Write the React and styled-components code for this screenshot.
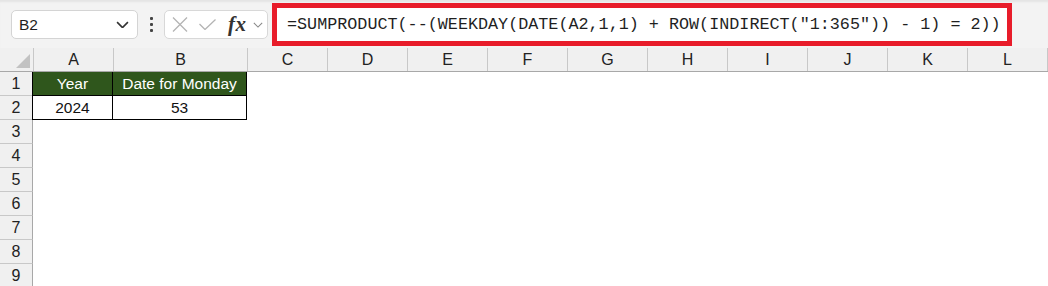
import React from 'react';
import styled, { createGlobalStyle } from 'styled-components';

const GlobalStyle = createGlobalStyle`
  body {
    margin: 0;
    background: #ffffff;
    font-family: "Liberation Sans", Arial, sans-serif;
  }
`;

const Sheet = styled.div`
  width: 1048px;
  height: 286px;
  overflow: hidden;
  background: #fff;
`;

const Toolbar = styled.div`
  height: 45px;
  padding-top: 3px;
  background: #f3f3f3;
  display: flex;
  align-items: center;
  box-shadow: inset 0 3px 2px -1px #e4e4e4;
`;

const NameBox = styled.div`
  margin-left: 11px;
  width: 110px;
  height: 27px;
  background: #fff;
  border: 1px solid #d4d4d4;
  border-radius: 5px;
  display: flex;
  align-items: center;
  justify-content: space-between;
  padding: 0 8px 0 7px;
  box-sizing: content-box;
  font-size: 15.5px;
  color: #1f1f1f;
  margin-top: -2px;
`;

const Dots = styled.div`
  width: 26px;
  display: flex;
  flex-direction: column;
  align-items: center;
  gap: 3px;
  margin-top: -2px;

  span {
    width: 3px;
    height: 3px;
    background: #444;
    border-radius: 1px;
  }
`;

const FxBox = styled.div`
  width: 104px;
  height: 29px;
  background: #fff;
  border: 1px solid #d8d8d8;
  border-radius: 5px;
  display: flex;
  align-items: center;
  padding-left: 7px;
  box-sizing: border-box;
  margin-top: -2px;
  gap: 11px;
`;

const FxLabel = styled.span`
  font-family: "Liberation Serif", "Times New Roman", serif;
  font-style: italic;
  font-weight: bold;
  font-size: 21px;
  color: #333;
  letter-spacing: 0.5px;
  margin-left: 1px;
`;

const FxCaret = styled.span`
  display: flex;
  margin-left: -5px;
`;

const FormulaBox = styled.div`
  margin-left: 4px;
  width: 740px;
  height: 43px;
  box-sizing: border-box;
  border: 5px solid #e81c2a;
  background: #fff;
  display: flex;
  align-items: center;
  padding-left: 10px;
  margin-top: -2px;
  font-family: "Liberation Mono", "Courier New", monospace;
  font-size: 16.75px;
  color: #1f1f1f;
  white-space: pre;
`;

const HeaderRow = styled.div`
  display: flex;
  height: 23px;
  background: #f0f0f0;
  border-bottom: 1px solid #a8a8a8;
`;

const Corner = styled.div`
  width: 33px;
  border-right: 1px solid #c8c8c8;
  position: relative;
  flex-shrink: 0;

  &::after {
    content: '';
    position: absolute;
    right: 3px;
    bottom: 3px;
    width: 0;
    height: 0;
    border-left: 14px solid transparent;
    border-bottom: 14px solid #c2c2c2;
  }
`;

const ColHead = styled.div`
  width: ${({ w }) => w - 1}px;
  flex-shrink: 0;
  border-right: 1px solid #c8c8c8;
  display: flex;
  align-items: center;
  justify-content: center;
  font-size: 16px;
  color: #222;
`;

const Row = styled.div`
  display: flex;
  height: 24px;
`;

const RowHead = styled.div`
  width: 33px;
  flex-shrink: 0;
  box-sizing: border-box;
  background: #f0f0f0;
  border-right: 1px solid #a8a8a8;
  border-bottom: 1px solid #c8c8c8;
  display: flex;
  align-items: center;
  justify-content: center;
  font-size: 16px;
  color: #222;
`;

const Cell = styled.div`
  width: ${({ w }) => w}px;
  flex-shrink: 0;
  box-sizing: border-box;
  display: flex;
  align-items: center;
  justify-content: center;
  font-size: 15.5px;
  background: ${({ head }) => (head ? '#2f561c' : '#fff')};
  color: ${({ head }) => (head ? '#fff' : '#111')};
  border-right: 1px solid #000;
  border-bottom: 1px solid #000;
  margin-left: ${({ first }) => (first ? '-1px' : '0')};
  border-left: ${({ first }) => (first ? '1px solid #000' : '0')};
`;

const Blank = styled.div`
  flex: 1;
  background: #fff;
`;

const Chevron = ({ size = 12, color = '#444', weight = 1.3 }) => (
  <svg width={size} height={size * 0.6} viewBox="0 0 12 7" fill="none">
    <path d="M1 1 L6 6 L11 1" stroke={color} strokeWidth={weight} />
  </svg>
);

const CancelIcon = () => (
  <svg width="16" height="15" viewBox="0 0 16 15" fill="none">
    <path d="M1 0.5 L15 14.5 M15 0.5 L1 14.5" stroke="#b4b4b4" strokeWidth="1.3" />
  </svg>
);

const CheckIcon = () => (
  <svg width="17" height="11" viewBox="0 0 17 11" fill="none">
    <path d="M0.5 5 L6 10.5 L16.5 0.5" stroke="#b4b4b4" strokeWidth="1.3" />
  </svg>
);

const columns = [
  ['A', 80], ['B', 134], ['C', 80], ['D', 80], ['E', 80], ['F', 80],
  ['G', 80], ['H', 80], ['I', 80], ['J', 80], ['K', 80], ['L', 80], ['', 40],
];

const formula = '=SUMPRODUCT(--(WEEKDAY(DATE(A2,1,1) + ROW(INDIRECT("1:365")) - 1) = 2))';

export default function App() {
  return (
    <>
      <GlobalStyle />
      <Sheet>
        <Toolbar>
          <NameBox>
            <span>B2</span>
            <Chevron size={13} color="#333" weight={1.5} />
          </NameBox>
          <Dots>
            <span />
            <span />
            <span />
          </Dots>
          <FxBox>
            <CancelIcon />
            <CheckIcon />
            <FxLabel>fx</FxLabel>
            <FxCaret>
              <Chevron size={10} color="#888" />
            </FxCaret>
          </FxBox>
          <FormulaBox>{formula}</FormulaBox>
        </Toolbar>

        <HeaderRow>
          <Corner />
          {columns.map(([name, w], i) => (
            <ColHead key={i} w={w}>{name}</ColHead>
          ))}
        </HeaderRow>

        <Row>
          <RowHead>1</RowHead>
          <Cell head first w={81}>Year</Cell>
          <Cell head w={134}>Date for Monday</Cell>
          <Blank />
        </Row>
        <Row>
          <RowHead>2</RowHead>
          <Cell first w={81}>2024</Cell>
          <Cell w={134}>53</Cell>
          <Blank />
        </Row>
        {[3, 4, 5, 6, 7, 8, 9].map((n) => (
          <Row key={n}>
            <RowHead>{n}</RowHead>
            <Blank />
          </Row>
        ))}
      </Sheet>
    </>
  );
}
